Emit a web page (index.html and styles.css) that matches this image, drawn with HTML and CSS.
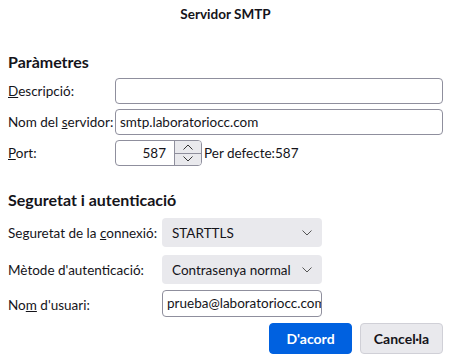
FILE: index.html
```html
<!DOCTYPE html>
<html lang="ca">
<head>
  <meta charset="UTF-8">
  <title>Servidor SMTP</title>
  <link rel="stylesheet" href="styles.css">
</head>
<body>
  <div class="dialog">
    <div class="dialog-title">Servidor SMTP</div>

    <h2 class="section-title">Paràmetres</h2>
    <div class="field-grid settings-grid">
      <label class="field-label"><u>D</u>escripció:</label>
      <div class="text-input"></div>

      <label class="field-label">Nom del <u>s</u>ervidor:</label>
      <div class="text-input">smtp.laboratoriocc.com</div>

      <label class="field-label"><u>P</u>ort:</label>
      <div class="port-row">
        <div class="number-input">
          <span class="number-value">587</span>
          <div class="spinner">
            <span class="spin-up">
              <svg width="12" height="8" viewBox="0 0 12 8"><path d="M1.5 6.5 L6 2 L10.5 6.5" fill="none" stroke="#333" stroke-width="1"/></svg>
            </span>
            <span class="spin-down">
              <svg width="12" height="8" viewBox="0 0 12 8"><path d="M1.5 1.5 L6 6 L10.5 1.5" fill="none" stroke="#333" stroke-width="1"/></svg>
            </span>
          </div>
        </div>
        <span class="port-default">Per defecte:587</span>
      </div>
    </div>

    <h2 class="section-title second">Seguretat i autenticació</h2>
    <div class="field-grid security-grid">
      <label class="field-label">Seguretat de la <u>c</u>onnexió:</label>
      <div class="select-box">
        <span>STARTTLS</span>
        <svg width="12" height="8" viewBox="0 0 12 8"><path d="M1.5 1.5 L6 6 L10.5 1.5" fill="none" stroke="#555" stroke-width="1"/></svg>
      </div>

      <label class="field-label">Mètode d'autent<u>i</u>cació:</label>
      <div class="select-box">
        <span>Contrasenya normal</span>
        <svg width="12" height="8" viewBox="0 0 12 8"><path d="M1.5 1.5 L6 6 L10.5 1.5" fill="none" stroke="#555" stroke-width="1"/></svg>
      </div>

      <label class="field-label">No<u>m</u> d'usuari:</label>
      <div class="text-input user-input">prueba@laboratoriocc.com</div>
    </div>

    <div class="dialog-buttons">
      <button type="button" class="btn btn-primary">D'acord</button>
      <button type="button" class="btn">Cancel·la</button>
    </div>
  </div>
</body>
</html>
```

FILE: styles.css
```css
body {
  margin: 0;
  background: #fff;
  font-family: 'Lato', sans-serif;
  font-size: 13.5px;
  color: #15141a;
}
.dialog {
  padding: 0 9px 0 8px;
}
.dialog-title {
  height: 28px;
  line-height: 28px;
  text-align: center;
  font-size: 13.5px;
  font-weight: 700;
}
.section-title {
  margin: 24px 0 6px;
  height: 20px;
  line-height: 20px;
  font-size: 16px;
  font-weight: 700;
}
.section-title.second {
  margin-bottom: 8px;
}
.field-grid {
  display: grid;
  align-items: center;
}
.settings-grid {
  grid-template-columns: 107px 1fr;
  row-gap: 5px;
}
.security-grid {
  grid-template-columns: 154px 160px;
  row-gap: 8px;
}
.field-label {
  white-space: nowrap;
}
.text-input {
  height: 24px;
  line-height: 24px;
  padding: 0 4px;
  border: 1px solid #8f8f9d;
  border-radius: 4px;
  background: #fff;
  overflow: hidden;
  white-space: nowrap;
}
.user-input {
  height: 25px;
  line-height: 25px;
  margin-top: -2px;
}
.port-row {
  display: flex;
  align-items: center;
  gap: 2px;
}
.number-input {
  display: flex;
  width: 85px;
  height: 24px;
  border: 1px solid #8f8f9d;
  border-radius: 4px;
  overflow: hidden;
}
.number-value {
  flex: 1;
  text-align: right;
  line-height: 24px;
  padding-right: 8px;
}
.spinner {
  display: flex;
  flex-direction: column;
  width: 26px;
  border-left: 1px solid #8f8f9d;
}
.spin-up, .spin-down {
  flex: 1;
  display: flex;
  align-items: center;
  justify-content: center;
  background: #e9e9ed;
}
.spin-up {
  border-bottom: 1px solid #8f8f9d;
}
.select-box {
  display: flex;
  align-items: center;
  justify-content: space-between;
  height: 29px;
  padding: 0 9px 0 10px;
  border-radius: 4px;
  background: #e9e9ed;
  box-sizing: border-box;
}
.dialog-buttons {
  display: flex;
  justify-content: flex-end;
  gap: 8px;
  margin-top: 6px;
}
.btn {
  width: 83px;
  height: 31px;
  border: 1px solid #d0d0d7;
  border-radius: 4px;
  background: #e9e9ed;
  color: #15141a;
  font-family: inherit;
  font-size: 14px;
  font-weight: 700;
}
.btn-primary {
  border-color: #0061e0;
  background: #0061e0;
  color: #fff;
}
```
